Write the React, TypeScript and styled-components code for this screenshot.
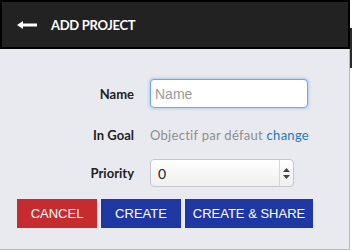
import React from 'react';
import styled, { createGlobalStyle } from 'styled-components';

const GlobalStyle = createGlobalStyle`
	html, body {
		margin: 0;
		padding: 0;
		background: #ffffff;
	}
	* {
		box-sizing: border-box;
	}
`;

const Page = styled.div`
	display: flex;
	width: 352px;
	height: 250px;
	overflow: hidden;
`;

const Panel = styled.div`
	width: 350px;
	height: 250px;
	display: flex;
	flex-direction: column;
`;

const Header = styled.div`
	height: 49px;
	border: 2px solid #000;
	background: #222222;
	display: flex;
	align-items: center;
	padding-left: 15px;
	color: #fff;
	font-family: Lato, 'Liberation Sans', sans-serif;
	font-weight: 700;
	font-size: 13px;
	letter-spacing: -0.3px;
	.back {
		display: flex;
		margin-right: 14px;
	}
`;

const Body = styled.div`
	flex: 1;
	background: #e9eaef;
	border-right: 1px solid #b9b9bd;
	border-bottom: 1px solid #b9b9bd;
	padding-top: 30px;
`;

const Form = styled.div`
	display: grid;
	grid-template-columns: 134px 158px;
	grid-template-rows: 29px 51px 28px;
	column-gap: 16px;
	align-items: center;
`;

const Label = styled.label<{ $nudge?: number }>`
	text-align: right;
	padding-top: ${(p) => p.$nudge || 0}px;
	font-family: Lato, 'Liberation Sans', sans-serif;
	font-weight: 700;
	font-size: 13px;
	color: #222;
`;

const TextInput = styled.input`
	width: 158px;
	height: 29px;
	border: 1px solid #6aa9ec;
	border-radius: 4px;
	box-shadow: 0 0 3px 1px rgba(110, 165, 235, 0.45);
	padding: 0 4px;
	font-family: 'Liberation Sans', Arial, sans-serif;
	font-size: 14px;
	color: #333;
	outline: none;
	&::placeholder {
		color: #9a9a9a;
	}
`;

const GoalText = styled.div`
	padding-top: 3px;
	font-family: Lato, 'Liberation Sans', sans-serif;
	font-size: 13px;
	letter-spacing: 0.28px;
	color: #8d8e93;
	white-space: nowrap;
	a {
		color: #1f77c2;
		text-decoration: none;
	}
`;

const Select = styled.div`
	width: 144px;
	height: 28px;
	display: flex;
	align-items: center;
	border: 1px solid #c7c7cb;
	border-radius: 4px;
	background: linear-gradient(#ffffff, #efeff1);
	font-family: Lato, 'Liberation Sans', sans-serif;
	font-size: 14px;
	color: #222;
	.value {
		flex: 1;
		padding-left: 7px;
	}
	.arrows {
		width: 14px;
		height: 100%;
		border-left: 1px solid #d6d6da;
		display: flex;
		align-items: center;
		justify-content: center;
	}
`;

const Actions = styled.div`
	display: flex;
	gap: 4px;
	padding-left: 17px;
	margin-top: 12px;
`;

const Button = styled.button<{ $tone: 'red' | 'blue'; $w: number }>`
	width: ${(p) => p.$w}px;
	height: 29px;
	border: none;
	border-radius: 0;
	background: ${(p) => (p.$tone === 'red' ? '#c62b2f' : '#1e37a2')};
	color: #fff;
	font-family: 'Liberation Sans', Arial, sans-serif;
	font-size: 13px;
	padding: 0;
	cursor: pointer;
`;

const Side = styled.div`
	width: 2px;
	display: flex;
	flex-direction: column;
	.strip {
		margin-top: 28px;
		height: 40px;
		background: #2a2a2a;
	}
`;

export default function App() {
	return (
		<>
			<GlobalStyle />
			<Page>
				<Panel>
					<Header>
						<span className='back'>
							<svg width='20' height='8' viewBox='0 0 20 8'>
								<polygon points='0,4 6,0 6,8' fill='#fff' />
								<rect x='5' y='2.5' width='15' height='3' fill='#fff' />
							</svg>
						</span>
						ADD PROJECT
					</Header>
					<Body>
						<Form>
							<Label>Name</Label>
							<TextInput placeholder='Name' />
							<Label $nudge={3}>In Goal</Label>
							<GoalText>
								Objectif par défaut <a href='#'>change</a>
							</GoalText>
							<Label>Priority</Label>
							<Select>
								<span className='value'>0</span>
								<span className='arrows'>
									<svg width='7' height='11' viewBox='0 0 7 11'>
										<polygon points='3.5,0 7,4 0,4' fill='#444' />
										<polygon points='0,7 7,7 3.5,11' fill='#444' />
									</svg>
								</span>
							</Select>
						</Form>
						<Actions>
							<Button $tone='red' $w={80}>CANCEL</Button>
							<Button $tone='blue' $w={80}>CREATE</Button>
							<Button $tone='blue' $w={128}>CREATE &amp; SHARE</Button>
						</Actions>
					</Body>
				</Panel>
				<Side>
					<div className='strip' />
				</Side>
			</Page>
		</>
	);
}
